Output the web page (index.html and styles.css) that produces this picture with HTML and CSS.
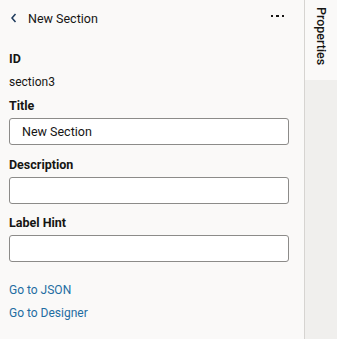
FILE: index.html
```html
<!DOCTYPE html>
<html>
<head>
<meta charset="utf-8">
<link rel="stylesheet" href="styles.css">
</head>
<body>
<div class="app">
  <div class="panel">
    <div class="header">
      <svg class="back" width="8" height="10" viewBox="0 0 8 10"><path d="M5.5 1 L2 5 L5.5 9" fill="none" stroke="#1d3a5c" stroke-width="1.5"/></svg>
      <span class="title">New Section</span>
      <span class="more"><i></i><i></i><i></i></span>
    </div>
    <div class="content">
      <div class="label">ID</div>
      <div class="value">section3</div>
      <div class="label l-title">Title</div>
      <div class="input">New Section</div>
      <div class="label l-next">Description</div>
      <div class="input"></div>
      <div class="label l-next">Label Hint</div>
      <div class="input"></div>
      <a class="link first">Go to JSON</a>
      <a class="link">Go to Designer</a>
    </div>
  </div>
  <div class="side">
    <div class="tab"><span>Properties</span></div>
    <div class="rest"></div>
  </div>
</div>
</body>
</html>
```
FILE: styles.css
```css
html, body { margin: 0; padding: 0; }
body {
  background: #faf9f8;
  font-family: Roboto, "Noto Sans", sans-serif;
  color: #161513;
  font-size: 12px;
}
.app { display: flex; height: 339px; width: 337px; }
.panel {
  width: 304px;
  border-right: 1px solid #d6d4d1;
  box-sizing: content-box;
}
.header {
  height: 36px;
  display: flex;
  align-items: center;
  padding-left: 10px;
}
.back { display: block; }
.title { margin-left: 10px; font-size: 12.5px; }
.more { margin-left: auto; margin-right: 20px; display: flex; gap: 3px; margin-top: -4px; }
.more i { display: block; width: 2.5px; height: 2.5px; background: #161513; }
.content { padding: 15px 15px 0 9px; display: flex; flex-direction: column; }
.label { font-weight: 700; line-height: 16px; font-size: 12.5px; }
.value { line-height: 16px; margin-top: 7px; }
.l-title { margin-top: 8px; }
.l-next { margin-top: 12px; }
.l-next + .input + .l-next { margin-top: 11px; }
.input {
  margin-top: 4px;
  height: 27px;
  box-sizing: border-box;
  border: 1px solid #8c8b89;
  border-radius: 3px;
  background: #ffffff;
  padding-left: 12px;
  line-height: 25px;
  font-size: 12.5px;
}
.link { color: #1e6da2; line-height: 16px; text-decoration: none; }
.link.first { margin-top: 20px; }
.link + .link { margin-top: 7px; }
.side { width: 32px; display: flex; flex-direction: column; }
.tab { height: 80px; display: flex; justify-content: center; padding-top: 7px; box-sizing: border-box; }
.tab span { writing-mode: vertical-rl; font-size: 12.5px; font-weight: 500; line-height: 12px; }
.rest { flex: 1; background: #f0efed; }
```
